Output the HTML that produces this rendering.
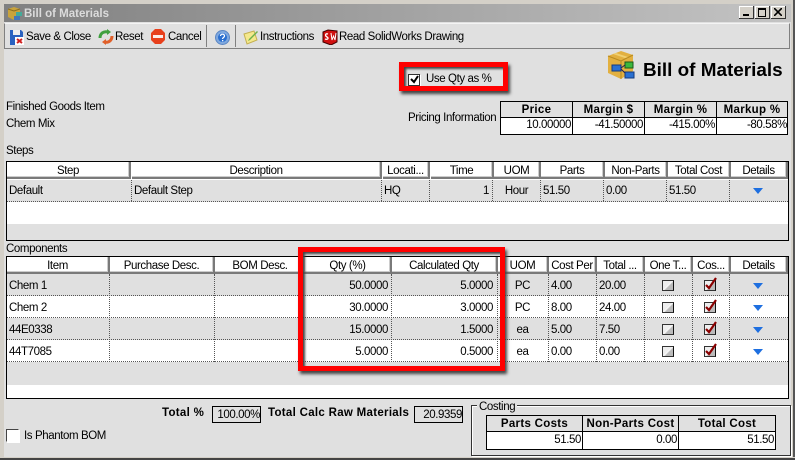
<!DOCTYPE html>
<html><head><meta charset="utf-8"><style>
html,body{margin:0;padding:0;background:#e0e0e0}
#w{position:relative;width:795px;height:460px;overflow:hidden;background:#e0e0e0;font:11.5px/14px "Liberation Sans",sans-serif;letter-spacing:-.4px;color:#000}
#w div,#w svg{position:absolute}
.t{white-space:nowrap;height:14px;margin-top:1px}
.c{text-align:center}.r{text-align:right}
.b{font-weight:bold;letter-spacing:.3px}
.h{background:#fff;border-right:2px solid #7a7a7a;border-bottom:2px solid #7a7a7a;box-shadow:inset -1px -1px 0 #ccc;text-align:center;white-space:nowrap;height:15px;line-height:18px;box-sizing:content-box;overflow:hidden}
.v{width:0;border-left:1px dotted #555}
.l{height:0;border-top:1px dotted #555}
.k{background:#000}
.red{border:5px solid #f00;box-sizing:border-box;box-shadow:2px 3px 3px #444,inset 2px 2px 2px #444}
.cb{width:10px;height:9px;border:1px solid #333;border-right-color:#111;background:linear-gradient(135deg,#eee 45%,#fff 50%,#bbb 60%)}
.s{border-left:1px solid #808080;width:0;top:25px;height:22px}
.wb{left:0;top:6px;width:15px;height:13px;background:#d4d0c8;border-right:1px solid #333;border-bottom:1px solid #333;box-sizing:border-box;box-shadow:inset 1px 1px 0 #fff}
</style></head><body><div id="w">
<!-- window frame -->
<div style="left:0;top:0;width:795px;height:4px;background:#d4d0c8"></div>
<div style="left:0;top:0;width:4px;height:460px;background:#d4d0c8"></div>
<div style="left:791px;top:0;width:4px;height:460px;background:#d4d0c8"></div>
<div style="left:793px;top:0;width:2px;height:460px;background:#555"></div>
<div style="left:0;top:457px;width:795px;height:3px;background:#d4d0c8"></div>
<div style="left:0;top:458px;width:795px;height:2px;background:#444"></div>
<!-- title bar -->
<div style="left:4px;top:4px;width:787px;height:18px;background:linear-gradient(90deg,#808080,#c4c4c4)"></div>
<div class="t" style="left:24px;top:6px;color:#dcdcdc;font-weight:bold;font-size:11.5px;letter-spacing:0">Bill of Materials</div>
<svg style="left:7px;top:6px" width="16" height="15" viewBox="0 0 16 15"><path d="M1 3l6-2 6 2v8l-6 3-6-3z" fill="#c9a33c"/><path d="M1 3l6 2 6-2" fill="none" stroke="#8c6d1f"/><rect x="9" y="6" width="6" height="4" fill="#4a9"/><rect x="7" y="10" width="6" height="4" fill="#47b"/></svg>
<div class="wb" style="left:739px"><div style="left:4px;top:8px;width:6px;height:2px;background:#000"></div></div>
<div class="wb" style="left:755px"><div style="left:3px;top:2px;width:6px;height:6px;border:1px solid #000;border-top-width:2px"></div></div>
<div class="wb" style="left:771px"><svg style="left:3px;top:2px" width="8" height="8"><path d="M0 0l8 8M8 0l-8 8" stroke="#000" stroke-width="1.6"/></svg></div>
<!-- toolbar -->
<div style="left:4px;top:23px;width:786px;height:26px;box-sizing:border-box;border:1px solid #808080;border-top-color:#f4f4f4;background:#e0e0e0"></div>
<svg style="left:10px;top:30px" width="15" height="15" viewBox="0 0 15 15"><path d="M0 0h11l2 2v13H0z" fill="#2a62c0"/><rect x="3" y="0" width="7" height="5" fill="#eee"/><rect x="5" y="7" width="9" height="8" fill="#fff"/><path d="M7 9l5 4M12 9l-5 4" stroke="#d02020" stroke-width="2"/></svg>
<div class="t" style="left:26px;top:29px">Save &amp; Close</div>
<svg style="left:98px;top:29px" width="16" height="16" viewBox="0 0 16 16"><path d="M2 9C2 4 6 2 10 3" fill="none" stroke="#3fa03f" stroke-width="3"/><path d="M9 0l4 3-4 3z" fill="#3fa03f"/><path d="M14 7c0 4-3 7-7 6" fill="none" stroke="#e0602a" stroke-width="3"/><path d="M8 10l-4 3 4 3z" fill="#e0602a"/></svg>
<div class="t" style="left:115px;top:29px">Reset</div>
<svg style="left:151px;top:29px" width="14" height="15" viewBox="0 0 14 15"><path d="M4 0h6l4 4v7l-4 4H4l-4-4V4z" fill="#e8401c"/><rect x="2" y="6" width="10" height="3" fill="#fff" opacity=".9"/></svg>
<div class="t" style="left:168px;top:29px">Cancel</div>
<div class="s" style="left:206px"></div>
<svg style="left:215px;top:30px" width="15" height="15" viewBox="0 0 15 15"><circle cx="7.5" cy="7.5" r="7" fill="#7fa8de" stroke="#5a86c4"/><circle cx="7.5" cy="7.5" r="4.5" fill="#2a6fd0"/><path d="M5.5 6c0-2.500 4-2.500 4 0 0 1.500-2 1.500-2 3" fill="none" stroke="#fff" stroke-width="1.300"/><rect x="7" y="10" width="1.300" height="1.300" fill="#fff"/></svg>
<div class="s" style="left:235px"></div>
<svg style="left:243px;top:29px" width="16" height="16" viewBox="0 0 16 16"><path d="M1 5l10-3 3 9-10 4z" fill="#f4e88c" stroke="#c4b050"/><path d="M6 10l8-8 1 1-8 8-2 1z" fill="#6cb04a"/></svg>
<div class="t" style="left:260px;top:29px">Instructions</div>
<svg style="left:322px;top:29px" width="16" height="16" viewBox="0 0 16 16"><path d="M1 3l5-2 9 1v11l-6 3-8-3z" fill="#d01010" stroke="#400"/><path d="M6 5c-3-1-3 2-1 3s1 3-2 2" fill="none" stroke="#fff" stroke-width="1.300"/><path d="M9 4l1 7 1.500-4 1.500 4 1-7" fill="none" stroke="#fff"/></svg>
<div class="t" style="left:339px;top:29px">Read SolidWorks Drawing</div>
<!-- header -->
<svg style="left:606px;top:50px" width="32" height="30" viewBox="0 0 32 30"><path d="M2 6l13-5 12 4v16l-12 8-13-6z" fill="#e2b040"/><path d="M2 6l13 5 12-6" fill="none" stroke="#b88a20"/><path d="M15 11v18" stroke="#b88a20"/><path d="M7 4l12 4 3-1-12-4z" fill="#f0d070"/><rect x="19" y="12" width="8" height="6" fill="#3cb83c" stroke="#1a5a1a"/><rect x="6" y="15" width="9" height="6" fill="#2a70d0" stroke="#123a80"/><rect x="19" y="22" width="9" height="6" fill="#2a70d0" stroke="#123a80"/><path d="M15 18l4-3M15 19l4 4" stroke="#225" /></svg>
<div class="t" style="left:643px;top:59px;font-size:18.9px;line-height:22px;height:22px;font-weight:bold;letter-spacing:0">Bill of Materials</div>
<div style="left:408px;top:74px;width:10px;height:10px;background:#fff;border:1px solid #333;box-shadow:1px 1px 0 #fff"></div>
<svg style="left:409px;top:74px" width="11" height="11"><path d="M2 5l3 3 4-6" fill="none" stroke="#000" stroke-width="2"/></svg>
<div class="t" style="left:426px;top:71px">Use Qty as %</div>
<div class="red" style="left:399px;top:62px;width:109px;height:29px"></div>
<div class="t" style="left:6px;top:99px">Finished Goods Item</div>
<div class="t" style="left:6px;top:116px">Chem Mix</div>
<div class="t" style="left:408px;top:110px">Pricing Information</div>
<!-- pricing table -->
<div style="left:500px;top:101px;width:288px;height:34px;border:1px solid #000;box-sizing:border-box;background:linear-gradient(#e0e0e0 15px,#000 15px,#000 16px,#fff 16px)"></div>
<div class="k" style="left:572px;top:101px;width:1px;height:34px"></div>
<div class="k" style="left:644px;top:101px;width:1px;height:34px"></div>
<div class="k" style="left:716px;top:101px;width:1px;height:34px"></div>
<div class="t c b" style="left:501px;top:102px;width:71px">Price</div>
<div class="t c b" style="left:573px;top:102px;width:71px">Margin $</div>
<div class="t c b" style="left:645px;top:102px;width:71px">Margin %</div>
<div class="t c b" style="left:717px;top:102px;width:70px">Markup %</div>
<div class="t r" style="left:501px;top:117px;width:70px">10.00000</div>
<div class="t r" style="left:573px;top:117px;width:70px">-41.50000</div>
<div class="t r" style="left:645px;top:117px;width:70px">-415.00%</div>
<div class="t r" style="left:717px;top:117px;width:70px">-80.58%</div>
<!-- Steps -->
<div class="t" style="left:6px;top:143px">Steps</div>
<div style="left:6px;top:161px;width:783px;height:80px;box-sizing:border-box;border:1px solid #000;background:#fff"></div>
<div style="left:7px;top:180px;width:781px;height:22px;background:#e0e0e0"></div>
<div style="left:7px;top:224px;width:781px;height:16px;background:#e0e0e0"></div>
<div class="h" style="left:7px;top:162px;width:122px">Step</div>
<div class="h" style="left:132px;top:162px;width:248px">Description</div>
<div class="h" style="left:383px;top:162px;width:45px">Locati...</div>
<div class="h" style="left:431px;top:162px;width:61px">Time</div>
<div class="h" style="left:494px;top:162px;width:45px">UOM</div>
<div class="h" style="left:541px;top:162px;width:62px">Parts</div>
<div class="h" style="left:605px;top:162px;width:61px">Non-Parts</div>
<div class="h" style="left:668px;top:162px;width:61px">Total Cost</div>
<div class="h" style="left:731px;top:162px;width:55px">Details</div>
<div class="l" style="left:7px;top:201px;width:781px"></div>
<div class="v" style="left:131px;top:180px;height:21px"></div>
<div class="v" style="left:381px;top:180px;height:21px"></div>
<div class="v" style="left:429px;top:180px;height:21px"></div>
<div class="v" style="left:492px;top:180px;height:21px"></div>
<div class="v" style="left:540px;top:180px;height:21px"></div>
<div class="v" style="left:603px;top:180px;height:21px"></div>
<div class="v" style="left:666px;top:180px;height:21px"></div>
<div class="v" style="left:729px;top:180px;height:21px"></div>
<div class="t" style="left:9px;top:183px">Default</div>
<div class="t" style="left:134px;top:183px">Default Step</div>
<div class="t" style="left:384px;top:183px">HQ</div>
<div class="t r" style="left:431px;top:183px;width:58px">1</div>
<div class="t c" style="left:494px;top:183px;width:45px">Hour</div>
<div class="t" style="left:543px;top:183px">51.50</div>
<div class="t" style="left:606px;top:183px">0.00</div>
<div class="t" style="left:669px;top:183px">51.50</div>
<svg style="left:753px;top:188px" width="10" height="6"><path d="M0 0h10L5 6z" fill="#1e6fe0"/></svg>
<!-- Components -->
<div class="t" style="left:6px;top:241px">Components</div>
<div style="left:6px;top:256px;width:783px;height:143px;box-sizing:border-box;border:1px solid #000;background:#fff"></div>
<div style="left:7px;top:274px;width:781px;height:22px;background:#e0e0e0"></div>
<div style="left:7px;top:318px;width:781px;height:22px;background:#e0e0e0"></div>
<div style="left:7px;top:362px;width:781px;height:23px;background:#e0e0e0"></div>
<div class="h" style="left:7px;top:257px;width:101px">Item</div>
<div class="h" style="left:110px;top:257px;width:103px">Purchase Desc.</div>
<div class="h" style="left:215px;top:257px;width:90px">BOM Desc.</div>
<div class="h" style="left:305px;top:257px;width:85px">Qty (%)</div>
<div class="h" style="left:392px;top:257px;width:104px">Calculated Qty</div>
<div class="h" style="left:498px;top:257px;width:49px">UOM</div>
<div class="h" style="left:549px;top:257px;width:46px">Cost Per</div>
<div class="h" style="left:597px;top:257px;width:46px">Total ...</div>
<div class="h" style="left:645px;top:257px;width:46px">One T...</div>
<div class="h" style="left:693px;top:257px;width:36px">Cos...</div>
<div class="h" style="left:731px;top:257px;width:55px">Details</div>
<div class="l" style="left:7px;top:295px;width:781px"></div>
<div class="l" style="left:7px;top:317px;width:781px"></div>
<div class="l" style="left:7px;top:339px;width:781px"></div>
<div class="l" style="left:7px;top:361px;width:781px"></div>
<div class="v" style="left:109px;top:274px;height:88px"></div>
<div class="v" style="left:214px;top:274px;height:88px"></div>
<div class="v" style="left:391px;top:274px;height:88px"></div>
<div class="v" style="left:497px;top:274px;height:88px"></div>
<div class="v" style="left:548px;top:274px;height:88px"></div>
<div class="v" style="left:596px;top:274px;height:88px"></div>
<div class="v" style="left:644px;top:274px;height:88px"></div>
<div class="v" style="left:692px;top:274px;height:88px"></div>
<div class="v" style="left:729px;top:274px;height:88px"></div>
<!-- rows -->
<div class="t" style="left:9px;top:278px">Chem 1</div><div class="t r" style="left:300px;top:278px;width:88px">50.0000</div><div class="t r" style="left:400px;top:278px;width:93px">5.0000</div><div class="t c" style="left:498px;top:278px;width:49px">PC</div><div class="t" style="left:551px;top:278px">4.00</div><div class="t" style="left:599px;top:278px">20.00</div>
<div class="t" style="left:9px;top:300px">Chem 2</div><div class="t r" style="left:300px;top:300px;width:88px">30.0000</div><div class="t r" style="left:400px;top:300px;width:93px">3.0000</div><div class="t c" style="left:498px;top:300px;width:49px">PC</div><div class="t" style="left:551px;top:300px">8.00</div><div class="t" style="left:599px;top:300px">24.00</div>
<div class="t" style="left:9px;top:322px">44E0338</div><div class="t r" style="left:300px;top:322px;width:88px">15.0000</div><div class="t r" style="left:400px;top:322px;width:93px">1.5000</div><div class="t c" style="left:498px;top:322px;width:49px">ea</div><div class="t" style="left:551px;top:322px">5.00</div><div class="t" style="left:599px;top:322px">7.50</div>
<div class="t" style="left:9px;top:344px">44T7085</div><div class="t r" style="left:300px;top:344px;width:88px">5.0000</div><div class="t r" style="left:400px;top:344px;width:93px">0.5000</div><div class="t c" style="left:498px;top:344px;width:49px">ea</div><div class="t" style="left:551px;top:344px">0.00</div><div class="t" style="left:599px;top:344px">0.00</div>
<!-- checkboxes -->
<div class="cb" style="left:662px;top:280px"></div><div class="cb" style="left:662px;top:302px"></div><div class="cb" style="left:662px;top:324px"></div><div class="cb" style="left:662px;top:346px"></div>
<div class="cb" style="left:704px;top:280px"></div><div class="cb" style="left:704px;top:302px"></div><div class="cb" style="left:704px;top:324px"></div><div class="cb" style="left:704px;top:346px"></div>
<svg style="left:705px;top:276px" width="13" height="14"><path d="M1 9l3 3 7-10" fill="none" stroke="#8a0000" stroke-width="2.200"/></svg>
<svg style="left:705px;top:298px" width="13" height="14"><path d="M1 9l3 3 7-10" fill="none" stroke="#8a0000" stroke-width="2.200"/></svg>
<svg style="left:705px;top:320px" width="13" height="14"><path d="M1 9l3 3 7-10" fill="none" stroke="#8a0000" stroke-width="2.200"/></svg>
<svg style="left:705px;top:342px" width="13" height="14"><path d="M1 9l3 3 7-10" fill="none" stroke="#8a0000" stroke-width="2.200"/></svg>
<svg style="left:753px;top:283px" width="10" height="6"><path d="M0 0h10L5 6z" fill="#1e6fe0"/></svg>
<svg style="left:753px;top:305px" width="10" height="6"><path d="M0 0h10L5 6z" fill="#1e6fe0"/></svg>
<svg style="left:753px;top:327px" width="10" height="6"><path d="M0 0h10L5 6z" fill="#1e6fe0"/></svg>
<svg style="left:753px;top:349px" width="10" height="6"><path d="M0 0h10L5 6z" fill="#1e6fe0"/></svg>
<div class="red" style="left:298px;top:247px;width:207px;height:124px"></div>
<!-- bottom -->
<div class="t b" style="left:162px;top:405px">Total %</div>
<div class="t r" style="left:212px;top:405px;width:49px;height:17px;line-height:17px;border:1px solid #000;box-sizing:border-box">100.00%</div>
<div class="t b" style="left:268px;top:405px">Total Calc Raw Materials</div>
<div class="t r" style="left:414px;top:405px;width:49px;height:17px;line-height:17px;border:1px solid #000;box-sizing:border-box">20.9359</div>
<div style="left:6px;top:429px;width:11px;height:11px;background:#fff;border:1px solid #444;border-right-color:#fff;border-bottom-color:#fff;box-shadow:1px 1px 0 #fff"></div>
<div class="t" style="left:24px;top:428px">Is Phantom BOM</div>
<div style="left:471px;top:405px;width:320px;height:51px;box-sizing:border-box;border:1px solid #333;box-shadow:inset 1px 1px 0 #fff,1px 1px 0 #fff"></div>
<div class="t" style="left:477px;top:399px;padding:0 2px;background:#e0e0e0">Costing</div>
<div style="left:486px;top:415px;width:290px;height:35px;border:1px solid #000;box-sizing:border-box;background:linear-gradient(#e0e0e0 15px,#000 15px,#000 16px,#fff 16px)"></div>
<div class="k" style="left:582px;top:415px;width:1px;height:35px"></div>
<div class="k" style="left:678px;top:415px;width:1px;height:35px"></div>
<div class="t c b" style="left:487px;top:416px;width:95px">Parts Costs</div>
<div class="t c b" style="left:583px;top:416px;width:95px">Non-Parts Cost</div>
<div class="t c b" style="left:679px;top:416px;width:96px">Total Cost</div>
<div class="t r" style="left:487px;top:432px;width:94px">51.50</div>
<div class="t r" style="left:583px;top:432px;width:94px">0.00</div>
<div class="t r" style="left:679px;top:432px;width:95px">51.50</div>
</div></body></html>
